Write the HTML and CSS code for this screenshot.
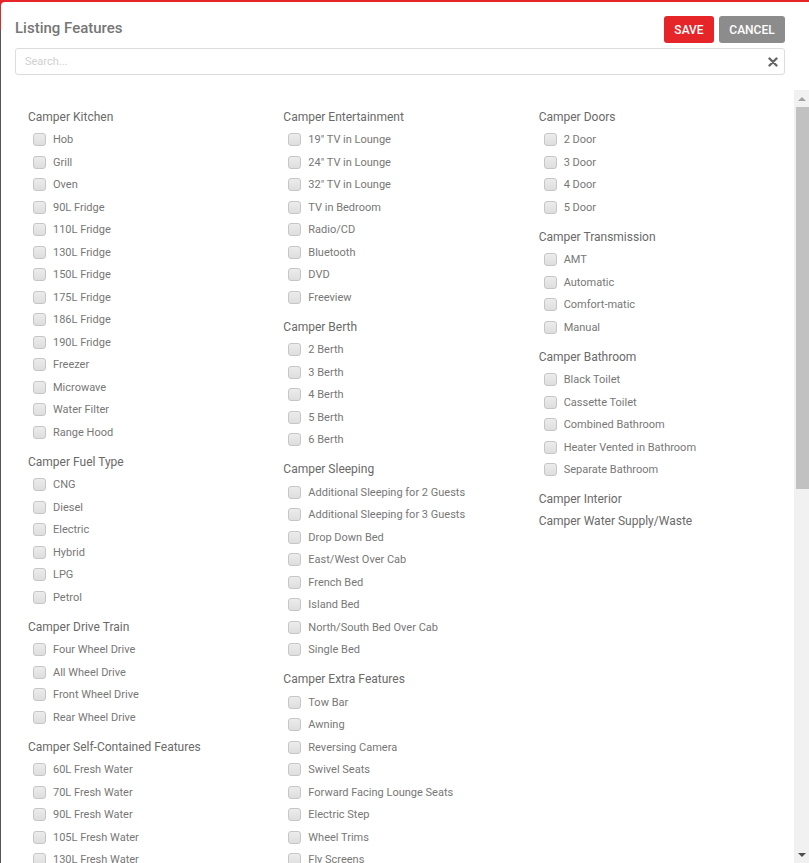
FILE: index.html
```html
<!DOCTYPE html>
<html>
<head>
<meta charset="utf-8">
<link rel="stylesheet" href="styles.css">
</head>
<body>
<div class="modal">
  <div class="header">
    <div class="top">
      <h1 class="title">Listing Features</h1>
      <div class="actions">
        <button class="btn btn-save">SAVE</button>
        <button class="btn btn-cancel">CANCEL</button>
      </div>
    </div>
    <div class="search">
      <span class="placeholder">Search...</span>
      <svg class="clear" width="10" height="10" viewBox="0 0 10 10"><path d="M1.5 1.5 L8.5 8.5 M8.5 1.5 L1.5 8.5" stroke="#666" stroke-width="2.4" stroke-linecap="round"/></svg>
    </div>
  </div>
  <div class="body">
    <div class="content">
      <div class="col">
        <div class="group"><div class="heading">Camper Kitchen</div>
          <ul class="list">
            <li class="item"><span class="box"></span>Hob</li>
            <li class="item"><span class="box"></span>Grill</li>
            <li class="item"><span class="box"></span>Oven</li>
            <li class="item"><span class="box"></span>90L Fridge</li>
            <li class="item"><span class="box"></span>110L Fridge</li>
            <li class="item"><span class="box"></span>130L Fridge</li>
            <li class="item"><span class="box"></span>150L Fridge</li>
            <li class="item"><span class="box"></span>175L Fridge</li>
            <li class="item"><span class="box"></span>186L Fridge</li>
            <li class="item"><span class="box"></span>190L Fridge</li>
            <li class="item"><span class="box"></span>Freezer</li>
            <li class="item"><span class="box"></span>Microwave</li>
            <li class="item"><span class="box"></span>Water Filter</li>
            <li class="item"><span class="box"></span>Range Hood</li>
          </ul>
        </div>
        <div class="group"><div class="heading">Camper Fuel Type</div>
          <ul class="list">
            <li class="item"><span class="box"></span>CNG</li>
            <li class="item"><span class="box"></span>Diesel</li>
            <li class="item"><span class="box"></span>Electric</li>
            <li class="item"><span class="box"></span>Hybrid</li>
            <li class="item"><span class="box"></span>LPG</li>
            <li class="item"><span class="box"></span>Petrol</li>
          </ul>
        </div>
        <div class="group"><div class="heading">Camper Drive Train</div>
          <ul class="list">
            <li class="item"><span class="box"></span>Four Wheel Drive</li>
            <li class="item"><span class="box"></span>All Wheel Drive</li>
            <li class="item"><span class="box"></span>Front Wheel Drive</li>
            <li class="item"><span class="box"></span>Rear Wheel Drive</li>
          </ul>
        </div>
        <div class="group"><div class="heading">Camper Self-Contained Features</div>
          <ul class="list">
            <li class="item"><span class="box"></span>60L Fresh Water</li>
            <li class="item"><span class="box"></span>70L Fresh Water</li>
            <li class="item"><span class="box"></span>90L Fresh Water</li>
            <li class="item"><span class="box"></span>105L Fresh Water</li>
            <li class="item"><span class="box"></span>130L Fresh Water</li>
            <li class="item"><span class="box"></span>150L Fresh Water</li>
          </ul>
        </div>
      </div>
      <div class="col">
        <div class="group"><div class="heading">Camper Entertainment</div>
          <ul class="list">
            <li class="item"><span class="box"></span>19" TV in Lounge</li>
            <li class="item"><span class="box"></span>24" TV in Lounge</li>
            <li class="item"><span class="box"></span>32" TV in Lounge</li>
            <li class="item"><span class="box"></span>TV in Bedroom</li>
            <li class="item"><span class="box"></span>Radio/CD</li>
            <li class="item"><span class="box"></span>Bluetooth</li>
            <li class="item"><span class="box"></span>DVD</li>
            <li class="item"><span class="box"></span>Freeview</li>
          </ul>
        </div>
        <div class="group"><div class="heading">Camper Berth</div>
          <ul class="list">
            <li class="item"><span class="box"></span>2 Berth</li>
            <li class="item"><span class="box"></span>3 Berth</li>
            <li class="item"><span class="box"></span>4 Berth</li>
            <li class="item"><span class="box"></span>5 Berth</li>
            <li class="item"><span class="box"></span>6 Berth</li>
          </ul>
        </div>
        <div class="group"><div class="heading">Camper Sleeping</div>
          <ul class="list">
            <li class="item"><span class="box"></span>Additional Sleeping for 2 Guests</li>
            <li class="item"><span class="box"></span>Additional Sleeping for 3 Guests</li>
            <li class="item"><span class="box"></span>Drop Down Bed</li>
            <li class="item"><span class="box"></span>East/West Over Cab</li>
            <li class="item"><span class="box"></span>French Bed</li>
            <li class="item"><span class="box"></span>Island Bed</li>
            <li class="item"><span class="box"></span>North/South Bed Over Cab</li>
            <li class="item"><span class="box"></span>Single Bed</li>
          </ul>
        </div>
        <div class="group"><div class="heading">Camper Extra Features</div>
          <ul class="list">
            <li class="item"><span class="box"></span>Tow Bar</li>
            <li class="item"><span class="box"></span>Awning</li>
            <li class="item"><span class="box"></span>Reversing Camera</li>
            <li class="item"><span class="box"></span>Swivel Seats</li>
            <li class="item"><span class="box"></span>Forward Facing Lounge Seats</li>
            <li class="item"><span class="box"></span>Electric Step</li>
            <li class="item"><span class="box"></span>Wheel Trims</li>
            <li class="item"><span class="box"></span>Fly Screens</li>
            <li class="item"><span class="box"></span>Solar Panel</li>
          </ul>
        </div>
      </div>
      <div class="col">
        <div class="group"><div class="heading">Camper Doors</div>
          <ul class="list">
            <li class="item"><span class="box"></span>2 Door</li>
            <li class="item"><span class="box"></span>3 Door</li>
            <li class="item"><span class="box"></span>4 Door</li>
            <li class="item"><span class="box"></span>5 Door</li>
          </ul>
        </div>
        <div class="group"><div class="heading">Camper Transmission</div>
          <ul class="list">
            <li class="item"><span class="box"></span>AMT</li>
            <li class="item"><span class="box"></span>Automatic</li>
            <li class="item"><span class="box"></span>Comfort-matic</li>
            <li class="item"><span class="box"></span>Manual</li>
          </ul>
        </div>
        <div class="group"><div class="heading">Camper Bathroom</div>
          <ul class="list">
            <li class="item"><span class="box"></span>Black Toilet</li>
            <li class="item"><span class="box"></span>Cassette Toilet</li>
            <li class="item"><span class="box"></span>Combined Bathroom</li>
            <li class="item"><span class="box"></span>Heater Vented in Bathroom</li>
            <li class="item"><span class="box"></span>Separate Bathroom</li>
          </ul>
        </div>
        <div class="group"><div class="heading heading-empty">Camper Interior</div></div>
        <div class="group"><div class="heading heading-empty">Camper Water Supply/Waste</div></div>
      </div>
    </div>
    <div class="scrollbar">
      <div class="sb-btn"><span class="arrow-up"></span></div>
      <div class="sb-track">
        <div class="sb-thumb"></div>
      </div>
      <div class="sb-btn"><span class="arrow-down"></span></div>
    </div>
  </div>
</div>
</body>
</html>
```

FILE: styles.css
```css
html, body {
  margin: 0;
  padding: 0;
  height: 863px;
  overflow: hidden;
}
body {
  background: linear-gradient(to bottom, #e52528 0, #e52528 30px, #555 30px, #555 100%);
  font-family: Roboto, "Liberation Sans", Arial, sans-serif;
}
.modal {
  margin: 2px 0 0 1px;
  height: 861px;
  background: #fff;
  border-top-left-radius: 4px;
  display: flex;
  flex-direction: column;
  overflow: hidden;
}
.header {
  padding: 14px 24px 0 14px;
}
.top {
  display: flex;
  justify-content: space-between;
  align-items: center;
  height: 27px;
}
.title {
  margin: 0;
  font-size: 15px;
  font-weight: 500;
  color: #767676;
  line-height: 27px;
  position: relative;
  top: -1px;
}
.actions {
  display: flex;
  gap: 5px;
}
.btn {
  border: none;
  border-radius: 3px;
  height: 27px;
  color: #fff;
  font-family: Roboto, "Liberation Sans", Arial, sans-serif;
  font-size: 12px;
  font-weight: 500;
  padding: 0;
  cursor: pointer;
}
.btn-save {
  width: 50px;
  background: #e52528;
}
.btn-cancel {
  width: 66px;
  background: #8c8c8c;
}
.search {
  margin-top: 5px;
  height: 25px;
  border: 1px solid #dcdcdc;
  border-radius: 3px;
  display: flex;
  align-items: center;
  justify-content: space-between;
  padding: 0 6px 0 9px;
}
.placeholder {
  font-size: 11px;
  color: #d0d0d0;
}
.clear {
  display: block;
}
.body {
  margin-top: 15px;
  flex: 1;
  min-height: 0;
  display: flex;
  padding-left: 14px;
}
.content {
  flex: 1;
  min-width: 0;
  overflow: hidden;
  padding: 15.5px 0 0 13px;
  display: grid;
  grid-template-columns: repeat(3, 1fr);
  align-items: start;
}
.heading {
  font-size: 12px;
  font-weight: 400;
  color: #6a6a6a;
  height: 23px;
  line-height: 23px;
}
.heading-empty {
  height: 22px;
  line-height: 22px;
}
.list {
  list-style: none;
  margin: 0 0 7px 0;
  padding: 0;
}
.item {
  height: 22.5px;
  display: flex;
  align-items: center;
  font-size: 11px;
  color: #777;
}
.box {
  box-sizing: border-box;
  width: 13px;
  height: 13px;
  margin: 0 7px 0 5px;
  border: 1px solid #c6c6c6;
  border-radius: 3px;
  background: linear-gradient(to bottom, #ececec, #dedede);
  flex: none;
}
.scrollbar {
  width: 15px;
  background: #f1f1f1;
  display: flex;
  flex-direction: column;
}
.sb-btn {
  height: 17px;
  display: flex;
  align-items: center;
  justify-content: center;
}
.arrow-up {
  width: 0;
  height: 0;
  border-left: 4px solid transparent;
  border-right: 4px solid transparent;
  border-bottom: 4px solid #a3a3a3;
}
.arrow-down {
  width: 0;
  height: 0;
  border-left: 4px solid transparent;
  border-right: 4px solid transparent;
  border-top: 4px solid #505050;
}
.sb-track {
  flex: 1;
  padding-left: 2px;
}
.sb-thumb {
  height: 382px;
  background: #c1c1c1;
}
```
